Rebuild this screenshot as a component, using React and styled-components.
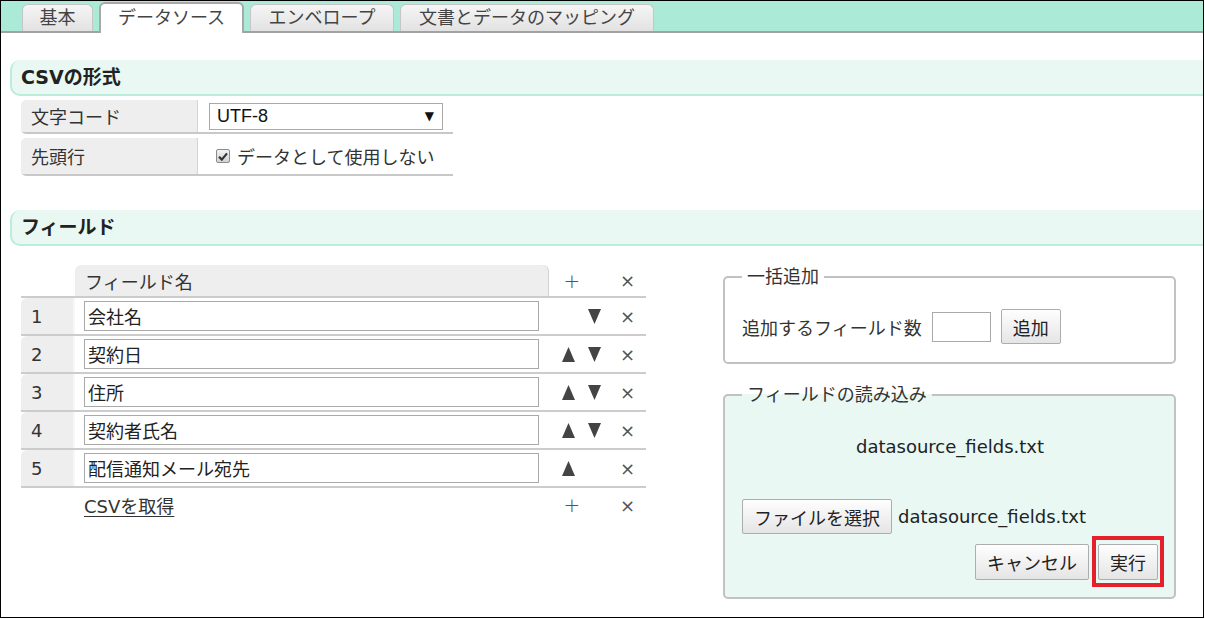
import React from 'react';
import styled, { createGlobalStyle } from 'styled-components';

const GlobalStyle = createGlobalStyle`
	html, body {
		margin: 0;
		padding: 0;
		background: #fff;
	}
	body {
		font-family: 'DejaVu Sans', 'Noto Sans CJK JP', sans-serif;
		font-size: 18px;
		color: #333;
	}
`;

const Frame = styled.div`
	width: 1204px;
	height: 618px;
	box-sizing: border-box;
	border: 1px solid #000;
	overflow: hidden;
	background: #fff;
`;

const TabBar = styled.div`
	height: 30px;
	background: #abead6;
	border-bottom: 2px solid #a2a2a2;
	display: flex;
	align-items: flex-end;
	padding-left: 21px;
	gap: 6px;
`;

const Tab = styled.div`
	box-sizing: border-box;
	width: ${(p) => p.$w}px;
	height: ${(p) => (p.$active ? '31px' : '27px')};
	margin-bottom: ${(p) => (p.$active ? '-2px' : '0')};
	border: ${(p) => (p.$active ? '2px solid #a8a8a8' : '1px solid #c6c6c6')};
	border-bottom: none;
	border-radius: 6px 6px 0 0;
	background: ${(p) =>
		p.$active ? '#fff' : 'linear-gradient(#f5f5f5, #e2e2e2)'};
	line-height: ${(p) => (p.$active ? '28px' : '26px')};
	text-align: center;
	color: #444;
	white-space: nowrap;
`;

const Main = styled.div`
	padding-top: 27px;
`;

const SectionHeader = styled.div`
	box-sizing: border-box;
	height: 36px;
	margin: ${(p) => p.$margin || '0'};
	margin-left: 9px;
	margin-right: -4px;
	padding-left: 9px;
	background: #e9f8f2;
	border-left: 2px solid #bcecdb;
	border-bottom: 2px solid #bcecdb;
	border-radius: 10px 0 0 10px;
	font-weight: bold;
	font-size: 19px;
	line-height: 34px;
	color: #222;
`;

const FormTable = styled.div`
	margin: 4px 0 0 20px;
	width: 432px;
`;

const FormRow = styled.div`
	box-sizing: border-box;
	height: ${(p) => p.$h}px;
	display: grid;
	grid-template-columns: 177px 1fr;
	border-bottom: 2px solid #c8c8c8;
	border-radius: 0 0 0 5px;
	& + & {
		margin-top: 4px;
	}
`;

const FormLabel = styled.div`
	background: #eee;
	border-right: 1px solid #d4d4d4;
	border-radius: 5px 0 0 0;
	padding-left: 10px;
	display: flex;
	align-items: center;
	color: #333;
`;

const FormValue = styled.div`
	padding-left: 11px;
	display: flex;
	align-items: center;
`;

const SelectBox = styled.div`
	box-sizing: border-box;
	width: 234px;
	height: 27px;
	border: 1px solid #a9a9a9;
	display: flex;
	justify-content: space-between;
	align-items: center;
	padding: 0 8px 0 7px;
	font-family: 'Liberation Sans', sans-serif;
	font-size: 18px;
	color: #111;
`;

const SelectArrow = styled.span`
	font-family: 'DejaVu Sans', sans-serif;
	font-size: 12px;
`;

const CheckLabel = styled.label`
	display: flex;
	align-items: center;
	color: #333;
`;

const CheckBox = styled.span`
	box-sizing: border-box;
	width: 14px;
	height: 14px;
	margin: 0 7px 0 7px;
	border: 1px solid #8c8c8c;
	border-radius: 2px;
	background: linear-gradient(#f2f2f2, #d2d2d2);
	display: flex;
	align-items: center;
	justify-content: center;
`;

const FieldsArea = styled.div`
	margin-top: 19px;
	padding-left: 20px;
	display: flex;
	align-items: flex-start;
`;

const FieldTable = styled.div`
	width: 625px;
`;

const GridRow = styled.div`
	box-sizing: border-box;
	height: ${(p) => p.$h}px;
	display: grid;
	grid-template-columns: 54px 474px 60px 37px;
	border-bottom: ${(p) => (p.$line ? '2px solid #cccccc' : 'none')};
`;

const HeadCell = styled.div`
	background: #eee;
	border-right: 1px solid #d2d2d2;
	border-radius: 6px 6px 0 0;
	padding-left: 10px;
	display: flex;
	align-items: center;
	color: #333;
`;

const NumCell = styled.div`
	background: #eee;
	border-right: 2px solid #f7f7f7;
	border-radius: 6px 0 0 0;
	padding-left: 10px;
	display: flex;
	align-items: center;
	color: #333;
`;

const NameCell = styled.div`
	padding-left: 9px;
	display: flex;
	align-items: center;
`;

const FieldInput = styled.input`
	box-sizing: border-box;
	width: 455px;
	height: 30px;
	margin: 0;
	padding: 0 3px;
	border: 1px solid #a9a9a9;
	font-family: 'DejaVu Sans', 'Noto Sans CJK JP', sans-serif;
	font-size: 18px;
	color: #222;
	background: #fff;
	outline: none;
`;

const ActionCell = styled.div`
	padding-left: 6px;
	display: flex;
	align-items: center;
`;

const Slot = styled.span`
	width: 26px;
	display: flex;
	justify-content: center;
	align-items: center;
	color: #444;
`;

const PlusSlot = styled(Slot)`
	margin-left: 4px;
	font-size: 20px;
	color: #555;
	font-weight: 300;
`;

const CloseCell = styled.div`
	display: flex;
	align-items: center;
	justify-content: center;
	color: #555;
	font-size: 18px;
`;

const CsvLink = styled.a`
	color: #333;
	text-decoration: underline;
	text-underline-offset: 3px;
`;

const SideColumn = styled.div`
	margin-left: 77px;
	width: 453px;
`;

const Box = styled.fieldset`
	margin: ${(p) => (p.$gap ? '19px 0 0' : '0')};
	padding: ${(p) => p.$pad};
	min-width: 0;
	border: 2px solid #c2c2c2;
	border-radius: 5px;
	background: ${(p) => (p.$tinted ? '#e9f8f2' : '#fff')};
`;

const Legend = styled.legend`
	padding: 0 5px;
	font-size: 18px;
	line-height: 24px;
	color: #333;
`;

const AddRow = styled.div`
	display: flex;
	align-items: center;
	gap: 10px;
	color: #333;
`;

const CountInput = styled.input`
	box-sizing: border-box;
	width: 59px;
	height: 30px;
	margin: 0;
	border: 1px solid #a9a9a9;
	font-size: 18px;
	outline: none;
`;

const Button = styled.button`
	box-sizing: border-box;
	height: ${(p) => p.$h || 35}px;
	padding: 0 11px;
	margin: 0;
	border: 1px solid #adadad;
	border-radius: 2px;
	background: linear-gradient(#fefefe, #e5e5e5);
	font-family: 'DejaVu Sans', 'Noto Sans CJK JP', sans-serif;
	font-size: 18px;
	color: #222;
	white-space: nowrap;
`;

const RunButton = styled(Button)`
	position: relative;
	&::after {
		content: '';
		position: absolute;
		top: -9px;
		left: -7px;
		right: -7px;
		bottom: -8px;
		border: 4px solid #e4212b;
		pointer-events: none;
	}
`;

const FileName = styled.div`
	line-height: 24px;
	text-align: center;
	color: #222;
`;

const FileRow = styled.div`
	margin-top: 40px;
	display: flex;
	align-items: center;
	gap: 6px;
	color: #222;
`;

const ButtonRow = styled.div`
	margin-top: 10px;
	display: flex;
	justify-content: flex-end;
	gap: 9px;
`;

const Up = () => (
	<svg width='13' height='15' viewBox='0 0 13 15'>
		<polygon points='6.5,0 13,15 0,15' fill='#444' />
	</svg>
);
const Down = () => (
	<svg width='13' height='15' viewBox='0 0 13 15'>
		<polygon points='0,0 13,0 6.5,15' fill='#444' />
	</svg>
);

const fields = [
	{ name: '会社名', up: false, down: true },
	{ name: '契約日', up: true, down: true },
	{ name: '住所', up: true, down: true },
	{ name: '契約者氏名', up: true, down: true },
	{ name: '配信通知メール宛先', up: true, down: false },
];

const tabs = [
	{ label: '基本', w: 71 },
	{ label: 'データソース', w: 145 },
	{ label: 'エンベロープ', w: 144 },
	{ label: '文書とデータのマッピング', w: 254 },
];

export default function App() {
	return (
		<>
			<GlobalStyle />
			<Frame>
				<TabBar>
					{tabs.map((t, i) => (
						<Tab key={t.label} $w={t.w} $active={i === 1}>
							{t.label}
						</Tab>
					))}
				</TabBar>
				<Main>
					<SectionHeader>CSVの形式</SectionHeader>
					<FormTable>
						<FormRow $h={34}>
							<FormLabel>文字コード</FormLabel>
							<FormValue>
								<SelectBox>
									<span>UTF-8</span>
									<SelectArrow>▼</SelectArrow>
								</SelectBox>
							</FormValue>
						</FormRow>
						<FormRow $h={38}>
							<FormLabel>先頭行</FormLabel>
							<FormValue>
								<CheckLabel>
									<CheckBox>
										<svg width='10' height='9' viewBox='0 0 10 9'>
											<path
												d='M1 4.8 L3.8 7.6 L9 1.4'
												fill='none'
												stroke='#333'
												strokeWidth='2.2'
											/>
										</svg>
									</CheckBox>
									データとして使用しない
								</CheckLabel>
							</FormValue>
						</FormRow>
					</FormTable>

					<SectionHeader $margin='34px 0 0'>フィールド</SectionHeader>

					<FieldsArea>
						<FieldTable>
							<GridRow $h={33} $line>
								<div />
								<HeadCell>フィールド名</HeadCell>
								<ActionCell>
									<PlusSlot>+</PlusSlot>
								</ActionCell>
								<CloseCell>×</CloseCell>
							</GridRow>
							{fields.map((f, i) => (
								<GridRow key={f.name} $h={38} $line>
									<NumCell>{i + 1}</NumCell>
									<NameCell>
										<FieldInput defaultValue={f.name} readOnly />
									</NameCell>
									<ActionCell>
										<Slot>{f.up && <Up />}</Slot>
										<Slot>{f.down && <Down />}</Slot>
									</ActionCell>
									<CloseCell>×</CloseCell>
								</GridRow>
							))}
							<GridRow $h={34}>
								<div />
								<NameCell>
									<CsvLink>CSVを取得</CsvLink>
								</NameCell>
								<ActionCell>
									<PlusSlot>+</PlusSlot>
								</ActionCell>
								<CloseCell>×</CloseCell>
							</GridRow>
						</FieldTable>

						<SideColumn>
							<Box $pad='20px 16px 18px 17px'>
								<Legend>一括追加</Legend>
								<AddRow>
									追加するフィールド数
									<CountInput />
									<Button>追加</Button>
								</AddRow>
							</Box>
							<Box $gap $tinted $pad='28px 16px 17px 17px'>
								<Legend>フィールドの読み込み</Legend>
								<FileName>datasource_fields.txt</FileName>
								<FileRow>
									<Button>ファイルを選択</Button>
									datasource_fields.txt
								</FileRow>
								<ButtonRow>
									<Button $h={36}>キャンセル</Button>
									<RunButton $h={36}>実行</RunButton>
								</ButtonRow>
							</Box>
						</SideColumn>
					</FieldsArea>
				</Main>
			</Frame>
		</>
	);
}
